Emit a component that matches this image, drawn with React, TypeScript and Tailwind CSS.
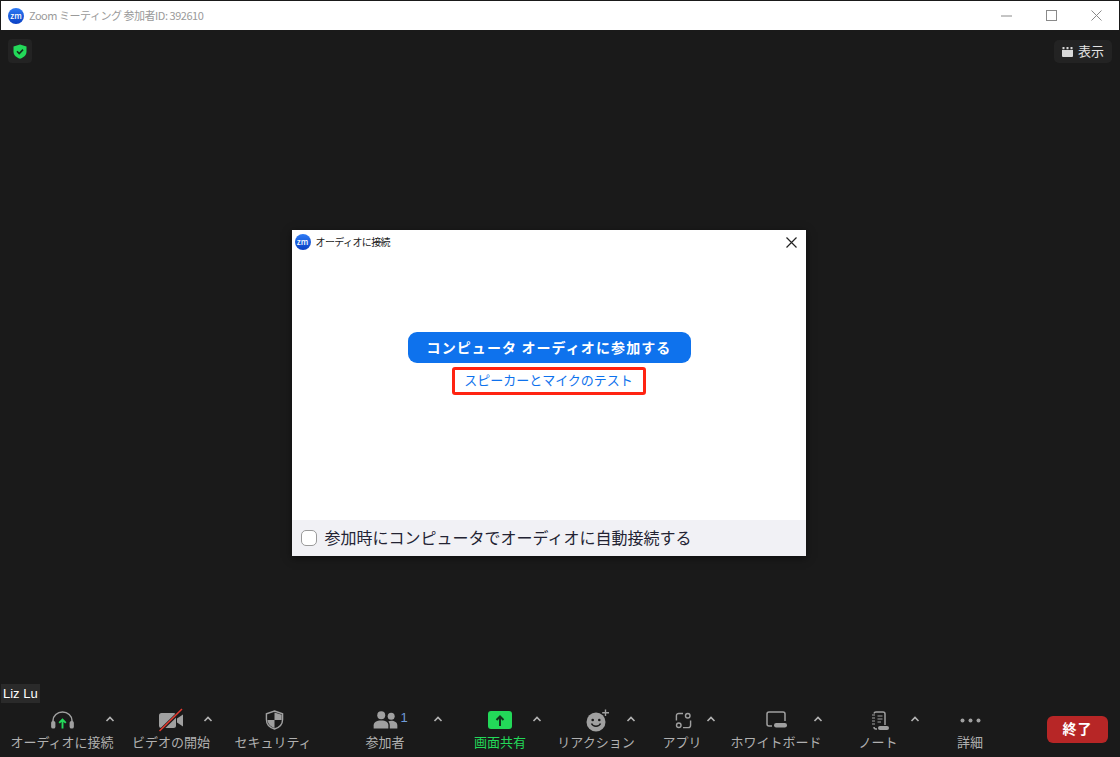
import type { ReactNode } from 'react';

function ZoomLogo() {
  return (
    <div className="flex h-4 w-4 items-center justify-center rounded-full bg-gradient-to-b from-[#2f7bf5] to-[#0b3fc4] text-[8px] font-medium leading-none text-white">
      zm
    </div>
  );
}

function Caret() {
  return (
    <svg width="10" height="6" viewBox="0 0 10 6" fill="none" stroke="#b4b4b4" strokeWidth="1.6">
      <path d="M1.5 5 L5 1.5 L8.5 5" />
    </svg>
  );
}

const HeadsetIcon = () => (
  <svg width="25" height="18" viewBox="0 0 26 19" fill="none">
    <path d="M3 12 V10 a10 9 0 0 1 20 0 V12" stroke="#a0a0a0" strokeWidth="1.6" />
    <rect x="1" y="10.5" width="4.5" height="8" rx="2" fill="#a0a0a0" />
    <rect x="20.5" y="10.5" width="4.5" height="8" rx="2" fill="#a0a0a0" />
    <path d="M13 18.5 V9.5 M9.5 12.5 L13 9 L16.5 12.5" stroke="#23d959" strokeWidth="2" />
  </svg>
);

const VideoOffIcon = () => (
  <svg width="26" height="24" viewBox="0 0 26 24" fill="none">
    <rect x="1" y="5" width="17" height="15" rx="2.5" fill="#a0a0a0" />
    <path d="M19 10.5 L25 6.5 V18.5 L19 14.5 Z" fill="#a0a0a0" />
    <path d="M1.5 23.5 L24.5 1" stroke="#1a1a1a" strokeWidth="3.2" />
    <path d="M1.5 23 L24 1" stroke="#e5392f" strokeWidth="1.5" />
  </svg>
);

const ShieldIcon = () => (
  <svg className="ml-[2px]" width="19" height="20" viewBox="0 0 20 21" fill="none">
    <path d="M10 1 L18.5 4 V10 C18.5 15 15 18.5 10 20 C5 18.5 1.5 15 1.5 10 V4 Z" stroke="#a0a0a0" strokeWidth="1.5" />
    <path d="M10 2.5 L17.5 5 V10.5 H10 Z M10 10.5 V19 C6 17.5 3 15 2.6 10.5 H10 Z" fill="#a0a0a0" />
  </svg>
);

const ParticipantsIcon = () => (
  <svg width="25" height="18" viewBox="0 0 25 19" fill="#a0a0a0">
    <circle cx="8" cy="4.5" r="4.2" />
    <circle cx="18.5" cy="5.5" r="3.7" />
    <path d="M0 18.5 V15 C0 12 3 10 8 10 C13 10 15.5 12 15.5 15 V18.5 Z" />
    <path d="M17 18.5 V15 C17 13.5 16.5 12 15.5 11 C16.5 10.5 17.5 10.3 18.5 10.3 C22 10.3 25 12 25 15 V18.5 Z" />
  </svg>
);

const ShareIcon = () => (
  <div className="flex h-[18px] w-[24px] items-center justify-center rounded-[3px] bg-[#23d959]">
    <svg width="10" height="11" viewBox="0 0 10 11" fill="none" stroke="#14301d" strokeWidth="2">
      <path d="M5 11 V2 M1.5 5 L5 1.5 L8.5 5" />
    </svg>
  </div>
);

const ReactionIcon = () => (
  <svg className="ml-[4px]" width="24" height="23" viewBox="0 0 24 23" fill="none">
    <circle cx="10" cy="13" r="9.5" fill="#a0a0a0" />
    <circle cx="6.7" cy="11" r="1.3" fill="#1a1a1a" />
    <circle cx="13.3" cy="11" r="1.3" fill="#1a1a1a" />
    <path d="M5.5 14.5 C7 18 13 18 14.5 14.5" stroke="#1a1a1a" strokeWidth="1.5" />
    <path d="M19.5 0.5 V7 M16.2 3.7 H23" stroke="#1a1a1a" strokeWidth="3.5" />
    <path d="M19.5 0.5 V7 M16.2 3.7 H23" stroke="#a0a0a0" strokeWidth="1.4" />
  </svg>
);

const AppsIcon = () => (
  <svg className="ml-[2px]" width="17" height="17" viewBox="0 0 17 18" fill="none" stroke="#a0a0a0" strokeWidth="1.5">
    <path d="M8 1.5 H3.5 a2.5 2.5 0 0 0 -2.5 2.5 V9" />
    <path d="M16 9 V14 a2.5 2.5 0 0 1 -2.5 2.5 H8" />
    <circle cx="13" cy="4" r="2.4" />
    <circle cx="3.5" cy="14" r="2.4" />
  </svg>
);

const WhiteboardIcon = () => (
  <svg className="-mt-[2px]" width="21" height="17" viewBox="0 0 21 17" fill="none">
    <path d="M6 15 H3 a2 2 0 0 1 -2 -2 V3 a2 2 0 0 1 2 -2 H17 a2 2 0 0 1 2 2 V10" stroke="#a0a0a0" strokeWidth="1.5" />
    <rect x="8" y="12" width="13" height="4.5" rx="2.2" fill="#a0a0a0" />
  </svg>
);

const NoteIcon = () => (
  <svg className="ml-[4px] mt-[2px]" width="18" height="20" viewBox="0 0 18 20" fill="none">
    <path d="M3 2.5 a2 2 0 0 1 2 -1.5 H12 a2 2 0 0 1 2 2 V14 M6 18 H5 a2 2 0 0 1 -2 -2" stroke="#a0a0a0" strokeWidth="1.5" />
    <path d="M1 4 H4 M1 7 H4 M1 10 H4 M1 13 H4 M6.5 5 H11.5 M6.5 8 H11.5 M6.5 11 H10" stroke="#a0a0a0" strokeWidth="1.2" />
    <rect x="7" y="15" width="11" height="4" rx="2" fill="#a0a0a0" />
  </svg>
);

const MoreIcon = () => (
  <svg width="21" height="5" viewBox="0 0 21 5" fill="#a0a0a0">
    <circle cx="2.5" cy="2.5" r="2" />
    <circle cx="10.5" cy="2.5" r="2" />
    <circle cx="18.5" cy="2.5" r="2" />
  </svg>
);

interface ToolProps {
  icon: ReactNode;
  label: string;
  width: string;
  caretLeft?: string;
  active?: boolean;
}

function Tool({ icon, label, width, caretLeft, active }: ToolProps) {
  return (
    <div className={`relative flex shrink-0 flex-col items-center ${width}`}>
      <div className="flex h-[30px] items-center justify-center pt-[4px]">{icon}</div>
      <span className={`whitespace-nowrap text-[13px] leading-[18px] ${active ? 'text-[#23d959]' : 'text-[#b0b0b0]'}`}>
        {label}
      </span>
      {caretLeft && (
        <div className={`absolute top-[11px] flex h-[10px] items-center ${caretLeft}`}>
          <Caret />
        </div>
      )}
    </div>
  );
}

export default function App() {
  return (
    <div className="flex h-[757px] w-[1120px] flex-col overflow-hidden border border-b-0 border-[#1a1a1a] bg-[#1a1a1a] font-['Noto_Sans_CJK_JP','Noto_Sans',sans-serif]">
      {/* Title bar */}
      <div className="flex h-[29px] shrink-0 items-center bg-white pl-[7px]">
        <ZoomLogo />
        <span className="ml-[5px] text-[11px] leading-none tracking-[-0.47px] text-[#9a9a9a]">Zoom ミーティング 参加者ID: 392610</span>
        <div className="ml-auto flex items-center gap-[34px] pr-[17px]">
          <svg width="11" height="11" viewBox="0 0 11 11" stroke="#8a8a8a" strokeWidth="1"><path d="M0 6 H11" /></svg>
          <svg width="11" height="11" viewBox="0 0 11 11" fill="none" stroke="#8a8a8a" strokeWidth="1"><rect x="0.5" y="0.5" width="10" height="10" /></svg>
          <svg width="11" height="11" viewBox="0 0 11 11" stroke="#8a8a8a" strokeWidth="1"><path d="M0.5 0.5 L10.5 10.5 M10.5 0.5 L0.5 10.5" /></svg>
        </div>
      </div>

      {/* Top overlay row */}
      <div className="flex h-[33px] shrink-0 items-end justify-between pl-[7px] pr-[7px]">
        <div className="flex h-[24px] w-[24px] items-center justify-center rounded-[4px] bg-[#232323]">
          <svg width="14" height="15" viewBox="0 0 14 15">
            <path d="M7 0.5 L13.5 2.5 V7.5 C13.5 11 11 13.5 7 14.8 C3 13.5 0.5 11 0.5 7.5 V2.5 Z" fill="#23d959" />
            <path d="M4 7.3 L6.2 9.5 L10 5.6" fill="none" stroke="#14301d" strokeWidth="1.6" />
          </svg>
        </div>
        <div className="flex h-[23px] w-[58px] items-center justify-center gap-[5px] rounded-[5px] bg-[#232323]">
          <svg width="11" height="10" viewBox="0 0 11 10" fill="#d8d8d8">
            <path d="M0 3 H11 V9 a1 1 0 0 1 -1 1 H1 a1 1 0 0 1 -1 -1 Z" />
            <path d="M0.5 0 H2.5 V2.2 H0.5 Z M4.5 0 H6.5 V2.2 H4.5 Z M8.5 0 H10.5 V2.2 H8.5 Z" />
          </svg>
          <span className="pb-[3px] text-[13px] leading-none text-[#e4e4e4]">表示</span>
        </div>
      </div>

      {/* Audio dialog */}
      <div className="flex min-h-0 flex-1 items-center justify-center pr-[23px] pt-[39px]">
        <div className="flex h-[326px] w-[514px] flex-col bg-white shadow-[0_2px_8px_rgba(0,0,0,0.5)]">
          <div className="flex h-[23px] items-center pl-[3px] pr-[9px] pt-[1px]">
            <ZoomLogo />
            <span className="ml-[5px] pb-[1px] text-[10px] leading-none tracking-[-0.6px] text-[#1a1a1a]">オーディオに接続</span>
            <svg className="ml-auto" width="11" height="11" viewBox="0 0 11 11" stroke="#222222" strokeWidth="1.2"><path d="M0.5 0.5 L10.5 10.5 M10.5 0.5 L0.5 10.5" /></svg>
          </div>
          <div className="flex flex-1 flex-col items-center pt-[79px]">
            <button className="ml-[1px] h-[31px] w-[283px] rounded-[9px] bg-[#0e72ed] pb-[2px] text-[14px] font-bold leading-none tracking-[1.1px] text-white">
              コンピュータ オーディオに参加する
            </button>
            <button className="mt-[4px] h-[28px] w-[194px] rounded-[3px] border-[3px] border-[#ff2311] pb-[4px] text-[13px] leading-none text-[#0e72ed]">
              スピーカーとマイクのテスト
            </button>
          </div>
          <label className="flex h-[36px] items-center bg-[#f1f1f5] pl-[9px]">
            <span className="h-[16px] w-[16px] rounded-[5px] border border-[#9a9a9a] bg-white" />
            <span className="ml-[8px] pb-[3px] text-[16px] leading-none text-[#232333]">参加時にコンピュータでオーディオに自動接続する</span>
          </label>
        </div>
      </div>

      {/* Name tag */}
      <div className="flex h-[19px] shrink-0">
        <span className="bg-[#2a2a2a] px-[2px] font-['Liberation_Sans',sans-serif] text-[13px] leading-[19px] text-white">Liz Lu</span>
      </div>

      {/* Toolbar */}
      <div className="flex h-[54px] shrink-0 items-start pl-[9px]">
        <Tool icon={<HeadsetIcon />} label="オーディオに接続" width="w-[104px]" caretLeft="left-[95px]" />
        <Tool icon={<VideoOffIcon />} label="ビデオの開始" width="w-[114px]" caretLeft="left-[89px]" />
        <Tool icon={<ShieldIcon />} label="セキュリティ" width="w-[90px]" />
        <Tool
          icon={
            <div className="relative">
              <ParticipantsIcon />
              <span className="absolute left-[28px] top-[-1px] font-['Liberation_Sans',sans-serif] text-[13px] leading-[16px] text-[#6f9bd8]">1</span>
            </div>
          }
          label="参加者"
          width="w-[134px]"
          caretLeft="left-[115px]"
        />
        <Tool icon={<ShareIcon />} label="画面共有" width="w-[96px]" caretLeft="left-[80px]" active />
        <Tool icon={<ReactionIcon />} label="リアクション" width="w-[96px]" caretLeft="left-[78px]" />
        <Tool icon={<AppsIcon />} label="アプリ" width="w-[76px]" caretLeft="left-[62px]" />
        <Tool icon={<WhiteboardIcon />} label="ホワイトボード" width="w-[112px]" caretLeft="left-[93px]" />
        <Tool icon={<NoteIcon />} label="ノート" width="w-[92px]" caretLeft="left-[78px]" />
        <Tool icon={<MoreIcon />} label="詳細" width="w-[92px]" />
        <button className="ml-[31px] mt-[13px] h-[27px] w-[61px] rounded-[6px] bg-[#b72626] pb-[3px] text-[14px] font-bold leading-none tracking-[1px] text-white">
          終了
        </button>
      </div>
    </div>
  );
}
